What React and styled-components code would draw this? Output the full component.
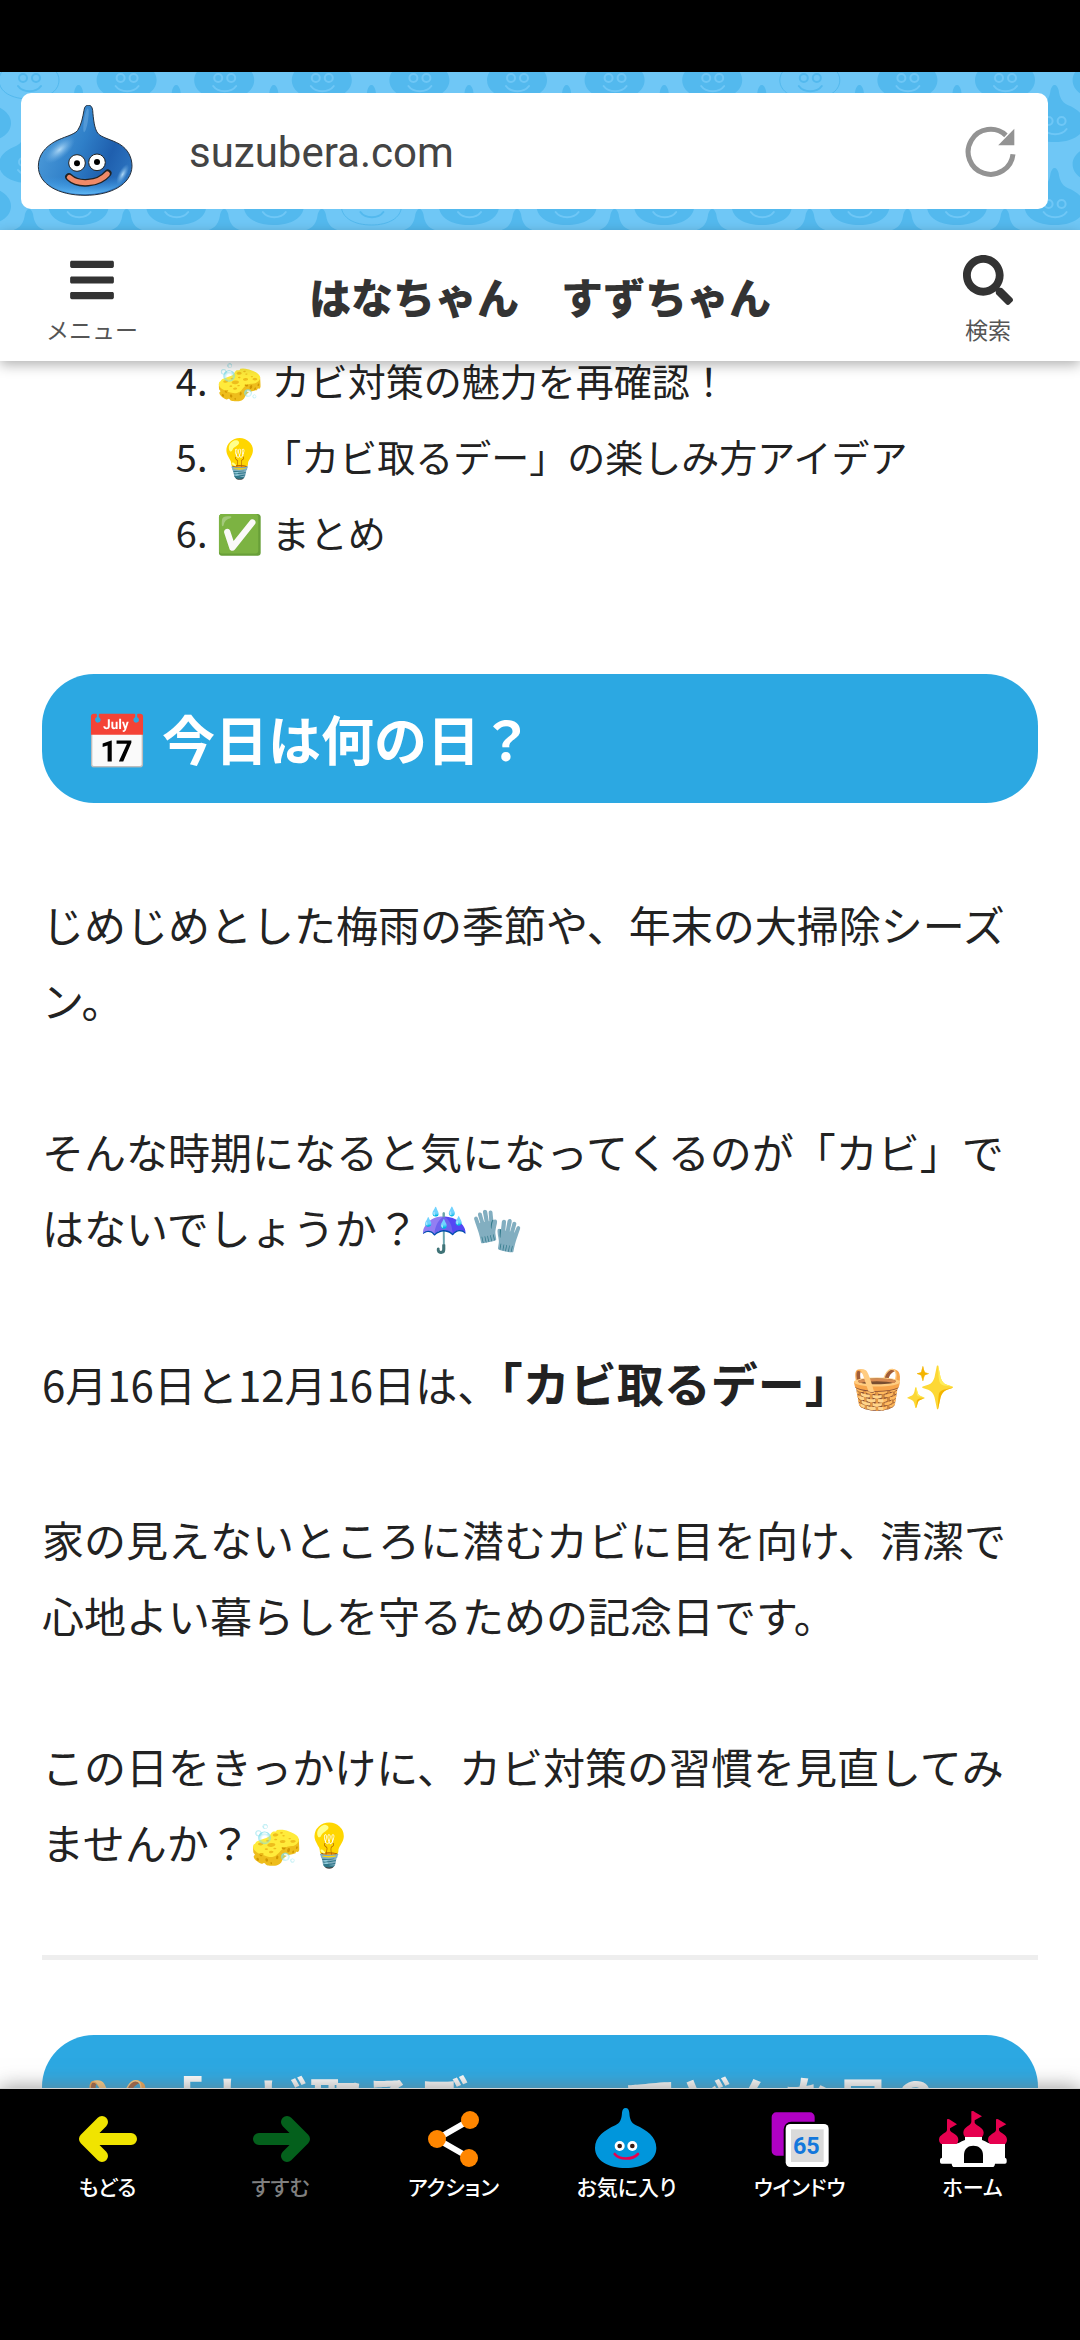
import { useState } from 'react';
import styled, { createGlobalStyle } from 'styled-components';
import { FaBars, FaSearch } from 'react-icons/fa';

const columns = [0, 1, 2, 3, 4, 5, 6, 7, 8, 9, 10, 11];

const patternRows = [
    { x: 29, y: 42, outlined: [0, 8] },
    { x: -19, y: 85, outlined: [] },
    { x: 29, y: 126, outlined: [] },
    { x: -19, y: 168, outlined: [4] },
    { x: 29, y: 209, outlined: [] },
];

const navItems = [
    { label: 'もどる', Icon: BackIcon },
    { label: 'すすむ', Icon: ForwardIcon, disabled: true },
    { label: 'アクション', Icon: ShareIcon },
    { label: 'お気に入り', Icon: SlimeIcon },
    { label: 'ウインドウ', Icon: WindowIcon },
    { label: 'ホーム', Icon: CastleIcon },
];

export default function App(){

    const [url, setUrl] = useState("suzubera.com");

    return(
        <>
        <GlobalStyle />
        <Screen>
            <StatusBar />
            <Browser>
                <SlimePattern />
                <UrlBar onSubmit={e => e.preventDefault()}>
                    <SlimeLogo />
                    <UrlInput type="text" aria-label="URL" value={url} onChange={e => setUrl(e.target.value)} />
                    <Reload type="button" aria-label="再読み込み">
                        <ReloadIcon />
                    </Reload>
                </UrlBar>
            </Browser>

            <SiteHeader>
                <HeaderButton type="button">
                    <FaBars size={50} />
                    <HeaderLabel>メニュー</HeaderLabel>
                </HeaderButton>
                <SiteName href="#">はなちゃん　すずちゃん</SiteName>
                <HeaderButton type="button">
                    <FaSearch size={50} />
                    <HeaderLabel>検索</HeaderLabel>
                </HeaderButton>
            </SiteHeader>

            <Article>
                <Toc start={4}>
                    <li><TocLink href="#charm">🧽 カビ対策の魅力を再確認！</TocLink></li>
                    <li><TocLink href="#ideas">💡「カビ取るデー」の楽しみ方アイデア</TocLink></li>
                    <li><TocLink href="#summary">✅ まとめ</TocLink></li>
                </Toc>

                <Heading>📅 今日は何の日？</Heading>
                <Text>じめじめとした梅雨の季節や、年末の大掃除シーズン。</Text>
                <Text>そんな時期になると気になってくるのが「カビ」ではないでしょうか？☔🧤</Text>
                <Text>6月16日と12月16日は、<Strong>「カビ取るデー」</Strong>🧺✨</Text>
                <Text>家の見えないところに潜むカビに目を向け、清潔で心地よい暮らしを守るための記念日です。</Text>
                <Text>この日をきっかけに、カビ対策の習慣を見直してみませんか？🧽💡</Text>
                <Divider />
                <Heading>🧺「カビ取るデー」ってどんな日？</Heading>
            </Article>

            <BottomNav>
                {navItems.map(({ label, Icon, disabled }) => (
                    <NavButton key={label} type="button" disabled={disabled}>
                        <Icon />
                        {label}
                    </NavButton>
                ))}
            </BottomNav>
        </Screen>
        </>
    )
}

function SlimePattern(){
    return(
        <PatternSvg aria-hidden="true">
            {patternRows.map(row => columns.map(i => (
                <PatternSlime
                    key={`${row.y}-${i}`}
                    x={row.x + i * 97.6}
                    y={row.y - 72}
                    outlined={row.outlined.includes(i)}
                />
            )))}
        </PatternSvg>
    )
}

function PatternSlime({ x, y, outlined }){
    const body = outlined ? '#6fc7f6' : '#53b9ee';
    const face = outlined ? '#53b9ee' : '#6fc7f6';
    return(
        <g transform={`translate(${x} ${y})`}>
            <path
                d="M0 0C2 0 3 2 4 5C5 12 7 17 13 20C23 24 30 30 30 38C30 50 17 57 0 57C-17 57 -30 50 -30 38C-30 30 -23 24 -13 20C-7 17 -5 12 -4 5C-3 2 -2 0 0 0Z"
                fill={body}
                stroke={outlined ? face : 'none'}
            />
            <g fill="none" stroke={face} strokeWidth="2">
                <circle cx="-6" cy="36" r="4" />
                <circle cx="7" cy="36" r="4" />
                <path d="M-11 44C-6 51 7 51 12 44" strokeLinecap="round" />
            </g>
        </g>
    )
}

function SlimeLogo(){
    return(
        <svg width="96" height="92" viewBox="110 114 288 276" aria-hidden="true">
            <defs>
                <linearGradient id="slimeBody" x1="0" y1="0.3" x2="1" y2="0.7">
                    <stop offset="0" stopColor="#4f9ddb" />
                    <stop offset="0.45" stopColor="#2f7fc8" />
                    <stop offset="0.75" stopColor="#1f5fae" />
                    <stop offset="1" stopColor="#2c74c0" />
                </linearGradient>
                <radialGradient id="slimeShine">
                    <stop offset="0" stopColor="#b4dcf8" stopOpacity="0.95" />
                    <stop offset="1" stopColor="#6db2e8" stopOpacity="0" />
                </radialGradient>
                <linearGradient id="slimeFoot" x1="0" y1="0" x2="0" y2="1">
                    <stop offset="0.8" stopColor="#3c9be8" stopOpacity="0" />
                    <stop offset="1" stopColor="#5fb8f5" />
                </linearGradient>
            </defs>
            <path d="M264 115C272 115 275 119 277 130C279 155 282 185 292 198C302 212 335 218 357 231C384 247 395 272 395 298C393 352 332 385 254 385C175 385 114 352 114 298C114 264 135 240 163 224C188 210 222 204 232 190C243 174 247 152 251 130C253 119 256 115 264 115Z" fill="url(#slimeBody)" stroke="#26303c" strokeWidth="3" />
            <path d="M264 118C270 118 273 122 275 132C277 158 280 187 290 201C302 215 333 221 355 234C382 250 392 273 392 298C390 349 331 382 254 382C176 382 117 350 117 298C117 267 137 243 165 227C190 213 224 207 235 192C246 174 250 152 254 132C256 121 258 118 264 118Z" fill="url(#slimeFoot)" />
            <ellipse cx="178" cy="248" rx="56" ry="25" fill="url(#slimeShine)" transform="rotate(-40 178 248)" />
            <ellipse cx="367" cy="322" rx="34" ry="13" fill="url(#slimeShine)" transform="rotate(-62 367 322)" />
            <ellipse cx="257" cy="160" rx="6" ry="36" fill="#8cc4ee" opacity="0.35" transform="rotate(9 257 160)" />
            <circle cx="230" cy="288" r="25" fill="#fff" stroke="#222" strokeWidth="3" />
            <circle cx="290" cy="286" r="25" fill="#fff" stroke="#222" strokeWidth="3" />
            <circle cx="230" cy="289" r="9" fill="#000" />
            <circle cx="290" cy="285" r="9" fill="#000" />
            <path d="M206 330C232 356 294 353 322 319" fill="none" stroke="#222" strokeWidth="23" strokeLinecap="round" />
            <path d="M207 331C233 355 294 352 321 321" fill="none" stroke="#f08a68" strokeWidth="15" strokeLinecap="round" />
        </svg>
    )
}

function ReloadIcon(){
    return(
        <svg width="51" height="51" viewBox="315 178 152 152" aria-hidden="true">
            <path d="M458 262A67 67 0 1 1 437 206" fill="none" stroke="#939393" strokeWidth="15" />
            <path d="M462 186V235H414Z" fill="#939393" />
        </svg>
    )
}

function BackIcon(){
    return(
        <NavSvg viewBox="0 0 70 60">
            <path d="M29 14L12 31L29 48M13 31H58" fill="none" stroke="#f0e400" strokeWidth="12" strokeLinecap="round" strokeLinejoin="round" />
        </NavSvg>
    )
}

function ForwardIcon(){
    return(
        <NavSvg viewBox="0 0 70 60">
            <path d="M41 14L58 31L41 48M57 31H13" fill="none" stroke="#04601c" strokeWidth="12" strokeLinecap="round" strokeLinejoin="round" />
        </NavSvg>
    )
}

function ShareIcon(){
    return(
        <NavSvg viewBox="0 0 70 60">
            <path d="M51 12L18 31L51 50" fill="none" stroke="#fff" strokeWidth="6" />
            <g fill="#ff8600">
                <circle cx="18" cy="31" r="9" />
                <circle cx="51" cy="12" r="9" />
                <circle cx="50" cy="50" r="9" />
            </g>
        </NavSvg>
    )
}

function SlimeIcon(){
    return(
        <NavSvg viewBox="2 84 210 180">
            <path d="M103 84C110 84 113 89 114 98C115 117 119 128 134 136C165 150 195 170 195 204C195 242 154 264 103 264C52 264 11 242 11 204C11 170 41 150 72 136C87 128 91 117 92 98C93 89 96 84 103 84Z" fill="#0096dc" />
            <circle cx="85" cy="198" r="15" fill="#fff" />
            <circle cx="123" cy="198" r="15" fill="#fff" />
            <circle cx="85" cy="198" r="7" fill="#3a1c14" />
            <circle cx="123" cy="198" r="7" fill="#3a1c14" />
            <path d="M70 222C84 240 124 240 140 222" fill="none" stroke="#e6004f" strokeWidth="8" strokeLinecap="round" />
        </NavSvg>
    )
}

function WindowIcon(){
    return(
        <NavSvg viewBox="523 84 210 180">
            <path d="M557 97H658A14 14 0 0 1 672 111V125H602A23 23 0 0 0 579 148V227H557A14 14 0 0 1 543 213V111A14 14 0 0 1 557 97Z" fill="#b000c4" />
            <rect x="585" y="132" width="129" height="129" rx="14" fill="#fff" />
            <rect x="601" y="148" width="98" height="98" fill="#dadada" />
            <WindowCount x="647" y="222" textAnchor="middle">65</WindowCount>
        </NavSvg>
    )
}

function CastleIcon(){
    return(
        <NavSvg viewBox="1041 84 210 180">
            <path d="M1053 190H1101C1108 186 1114 183 1122 180V168H1173V180C1181 183 1187 186 1194 190H1242V233Q1247 234 1247 239V246Q1247 251 1242 251H1212Q1211 261 1204 261H1090Q1083 261 1082 251H1052Q1047 251 1047 246V239Q1047 234 1053 233Z" fill="#fff" />
            <path d="M1119 249V225C1119 207 1131 197 1147 197C1163 197 1176 207 1176 225V249Z" fill="#000" />
            <g fill="#e6004f">
                <path d="M1141 94Q1147 91 1151 96L1173 109L1151 121V128C1154 137 1178 141 1178 158Q1178 166 1173 171H1122Q1117 166 1117 158C1117 141 1140 137 1141 126Z" />
                <path d="M1068 118Q1073 115 1077 119L1098 133L1077 145V151C1080 160 1102 163 1102 179Q1102 187 1097 192H1050Q1044 187 1044 179C1044 163 1067 160 1068 150Z" />
                <path d="M1215 118Q1220 115 1224 119L1246 133L1224 145V151C1227 160 1248 163 1248 179Q1248 187 1243 192H1197Q1191 187 1191 179C1191 163 1214 160 1215 150Z" />
            </g>
        </NavSvg>
    )
}

const GlobalStyle = createGlobalStyle`
    * {
        box-sizing: border-box;
    }
    body {
        margin: 0;
        background-color: #fff;
        color: #222;
        font-family: 'Noto Sans CJK JP', 'Noto Color Emoji', sans-serif;
    }
    button, input {
        font-family: inherit;
        border: none;
        padding: 0;
        background: none;
    }
    button {
        cursor: pointer;
    }
`;

const Screen = styled.div`
    display: flex;
    flex-direction: column;
    height: 100vh;
    overflow: hidden;
`;

const StatusBar = styled.div`
    flex: none;
    height: 72px;
    background-color: #000;
`;

const Browser = styled.header`
    flex: none;
    position: relative;
    padding: 21px 32px 21px 21px;
    background-color: #6fc7f6;
`;

const PatternSvg = styled.svg`
    position: absolute;
    inset: 0;
    width: 100%;
    height: 100%;
`;

const UrlBar = styled.form`
    position: relative;
    display: flex;
    align-items: center;
    height: 116px;
    padding: 0 32px 0 16px;
    border-radius: 10px;
    background-color: #fff;
`;

const UrlInput = styled.input`
    flex: 1;
    min-width: 0;
    margin: 0 56px;
    padding-top: 4px;
    font-family: Roboto, sans-serif;
    font-size: 42px;
    line-height: 50px;
    color: #444;
    outline: none;
`;

const Reload = styled.button`
    display: flex;
`;

const SiteHeader = styled.header`
    flex: none;
    position: relative;
    z-index: 1;
    display: flex;
    justify-content: space-between;
    align-items: center;
    height: 131px;
    padding: 0 42px;
    background-color: #fff;
    box-shadow: 0 4px 12px rgba(0, 0, 0, 0.3);
`;

const HeaderButton = styled.button`
    display: flex;
    flex-direction: column;
    align-items: center;
    gap: 6px;
    width: 100px;
    padding-top: 11px;
    color: #333;
`;

const HeaderLabel = styled.span`
    font-size: 23px;
    line-height: 36px;
    color: #555;
`;

const SiteName = styled.a`
    font-size: 42px;
    font-weight: 900;
    color: #333;
    text-decoration: none;
`;

const Article = styled.main`
    flex: 1;
    min-height: 0;
    overflow: hidden;
    padding: 0 42px;
`;

const Toc = styled.ol`
    margin: -19px 0 104px;
    padding-left: 174px;
    font-size: 38px;
    line-height: 76px;
`;

const TocLink = styled.a`
    color: inherit;
    text-decoration: none;
`;

const Heading = styled.h2`
    margin: 0 0 83px;
    padding: 26px 42px;
    border-radius: 52px;
    background-color: #2ca8e2;
    color: #fff;
    font-size: 53px;
    font-weight: 700;
    line-height: 77px;
`;

const Text = styled.p`
    margin: 0 0 76px;
    font-size: 42px;
    line-height: 1.8;
`;

const Strong = styled.strong`
    font-size: 47px;
`;

const Divider = styled.hr`
    height: 5px;
    margin: 0 0 75px;
    border: none;
    background-color: #eee;
`;

const BottomNav = styled.nav`
    flex: none;
    position: relative;
    display: flex;
    height: 252px;
    padding: 19px 21px 0;
    border-top: 1px solid #d4d4d4;
    background-color: #000;
    box-shadow: 0 0 20px rgba(120, 120, 120, 0.8);
`;

const NavButton = styled.button`
    flex: 1;
    display: flex;
    flex-direction: column;
    align-items: center;
    align-self: flex-start;
    gap: 2px;
    font-size: 21px;
    font-weight: 500;
    font-feature-settings: 'palt';
    line-height: 32px;
    white-space: nowrap;
    color: ${props => props.disabled ? '#808080' : '#fff'};
`;

const NavSvg = styled.svg`
    width: 70px;
    height: 60px;
`;

const WindowCount = styled.text`
    font-family: Roboto, sans-serif;
    font-size: 70px;
    font-weight: 700;
    font-feature-settings: normal;
    fill: #1478dc;
`;
